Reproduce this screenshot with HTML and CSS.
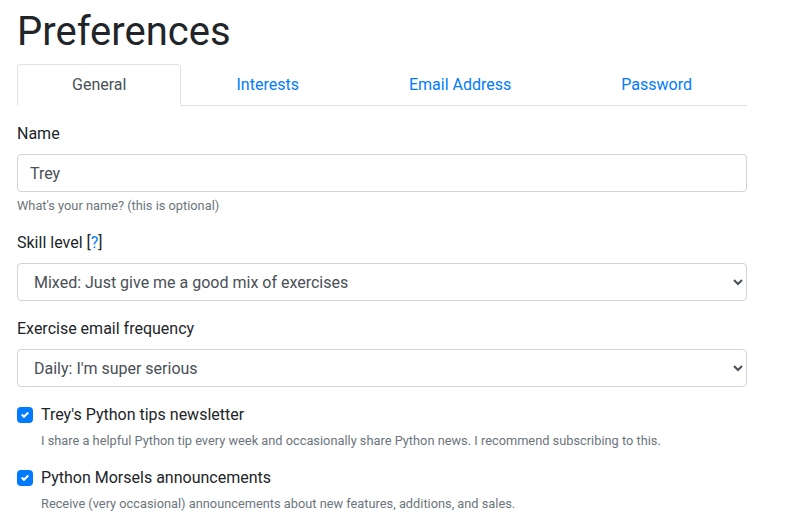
FILE: index.html
```html
<!DOCTYPE html>
<html lang="en">
<head>
<meta charset="utf-8">
<title>Preferences</title>
<link rel="stylesheet" href="styles.css">
</head>
<body>
<div class="container">
  <h1 class="title">Preferences</h1>
  <ul class="tabs">
    <li class="tab"><a class="tab-link active" href="#">General</a></li>
    <li class="tab"><a class="tab-link" href="#">Interests</a></li>
    <li class="tab"><a class="tab-link" href="#">Email Address</a></li>
    <li class="tab"><a class="tab-link" href="#">Password</a></li>
  </ul>
  <form class="tab-content">
    <div class="group">
      <label class="label" for="name">Name</label>
      <input class="control" id="name" type="text" value="Trey">
      <small class="help">What's your name? (this is optional)</small>
    </div>
    <div class="group">
      <label class="label" for="skill">Skill level [<a class="link" href="#">?</a>]</label>
      <select class="control select" id="skill">
        <option>Mixed: Just give me a good mix of exercises</option>
      </select>
    </div>
    <div class="group">
      <label class="label" for="freq">Exercise email frequency</label>
      <select class="control select" id="freq">
        <option>Daily: I'm super serious</option>
      </select>
    </div>
    <div class="group check">
      <div class="check-row">
        <span class="box"><svg width="8" height="8" viewBox="0 0 8 8"><path fill="#fff" d="M6.564.75l-3.59 3.612-1.538-1.55L0 4.26l2.974 2.99L8 2.193z"/></svg></span>
        <span class="check-label">Trey's Python tips newsletter</span>
      </div>
      <small class="help">I share a helpful Python tip every week and occasionally share Python news. I recommend subscribing to this.</small>
    </div>
    <div class="group check">
      <div class="check-row">
        <span class="box"><svg width="8" height="8" viewBox="0 0 8 8"><path fill="#fff" d="M6.564.75l-3.59 3.612-1.538-1.55L0 4.26l2.974 2.99L8 2.193z"/></svg></span>
        <span class="check-label">Python Morsels announcements</span>
      </div>
      <small class="help">Receive (very occasional) announcements about new features, additions, and sales.</small>
    </div>
  </form>
</div>
</body>
</html>
```
FILE: styles.css
```css
* { box-sizing: border-box; }
html, body { margin: 0; padding: 0; background: #fff; }
body {
  font-family: Roboto, "Liberation Sans", sans-serif;
  font-size: 16px;
  line-height: 1.5;
  color: #212529;
}
.container {
  width: 764px;
  padding: 8px 17px 0 17px;
}
.title {
  margin: 0 0 8px 0;
  font-size: 40px;
  font-weight: 400;
  line-height: 48px;
  color: #212529;
}
.tabs {
  display: flex;
  list-style: none;
  margin: 0;
  padding: 0;
  border-bottom: 1px solid #dee2e6;
  width: 730px;
}
.tab {
  flex: 1 1 auto;
  text-align: center;
  margin-bottom: -1px;
}
.tab-link {
  display: block;
  padding: 8px 16px;
  border: 1px solid transparent;
  border-top-left-radius: 4px;
  border-top-right-radius: 4px;
  color: #007bff;
  text-decoration: none;
}
.tab-link.active {
  color: #495057;
  background: #fff;
  border-color: #dee2e6 #dee2e6 #fff;
}
.tab-content {
  padding-top: 16px;
  width: 730px;
}
.group { margin-bottom: 16px; }
.label {
  display: inline-block;
  margin-bottom: 8px;
}
.link { color: #007bff; text-decoration: none; }
.control {
  display: block;
  width: 100%;
  height: 38px;
  padding: 6px 12px;
  font-family: inherit;
  font-size: 16px;
  line-height: 1.5;
  color: #495057;
  background: #fff;
  border: 1px solid #ced4da;
  border-radius: 4px;
  margin: 0;
}
.help {
  display: block;
  margin-top: 4px;
  font-size: 12.8px;
  line-height: 1.5;
  color: #6c757d;
}
.check { padding-left: 24px; }
.check-row {
  position: relative;
  min-height: 24px;
}
.box {
  position: absolute;
  left: -24px;
  top: 4px;
  width: 16px;
  height: 16px;
  border-radius: 4px;
  background: #007bff;
  display: flex;
  align-items: center;
  justify-content: center;
}
.box svg { display: block; }
```
